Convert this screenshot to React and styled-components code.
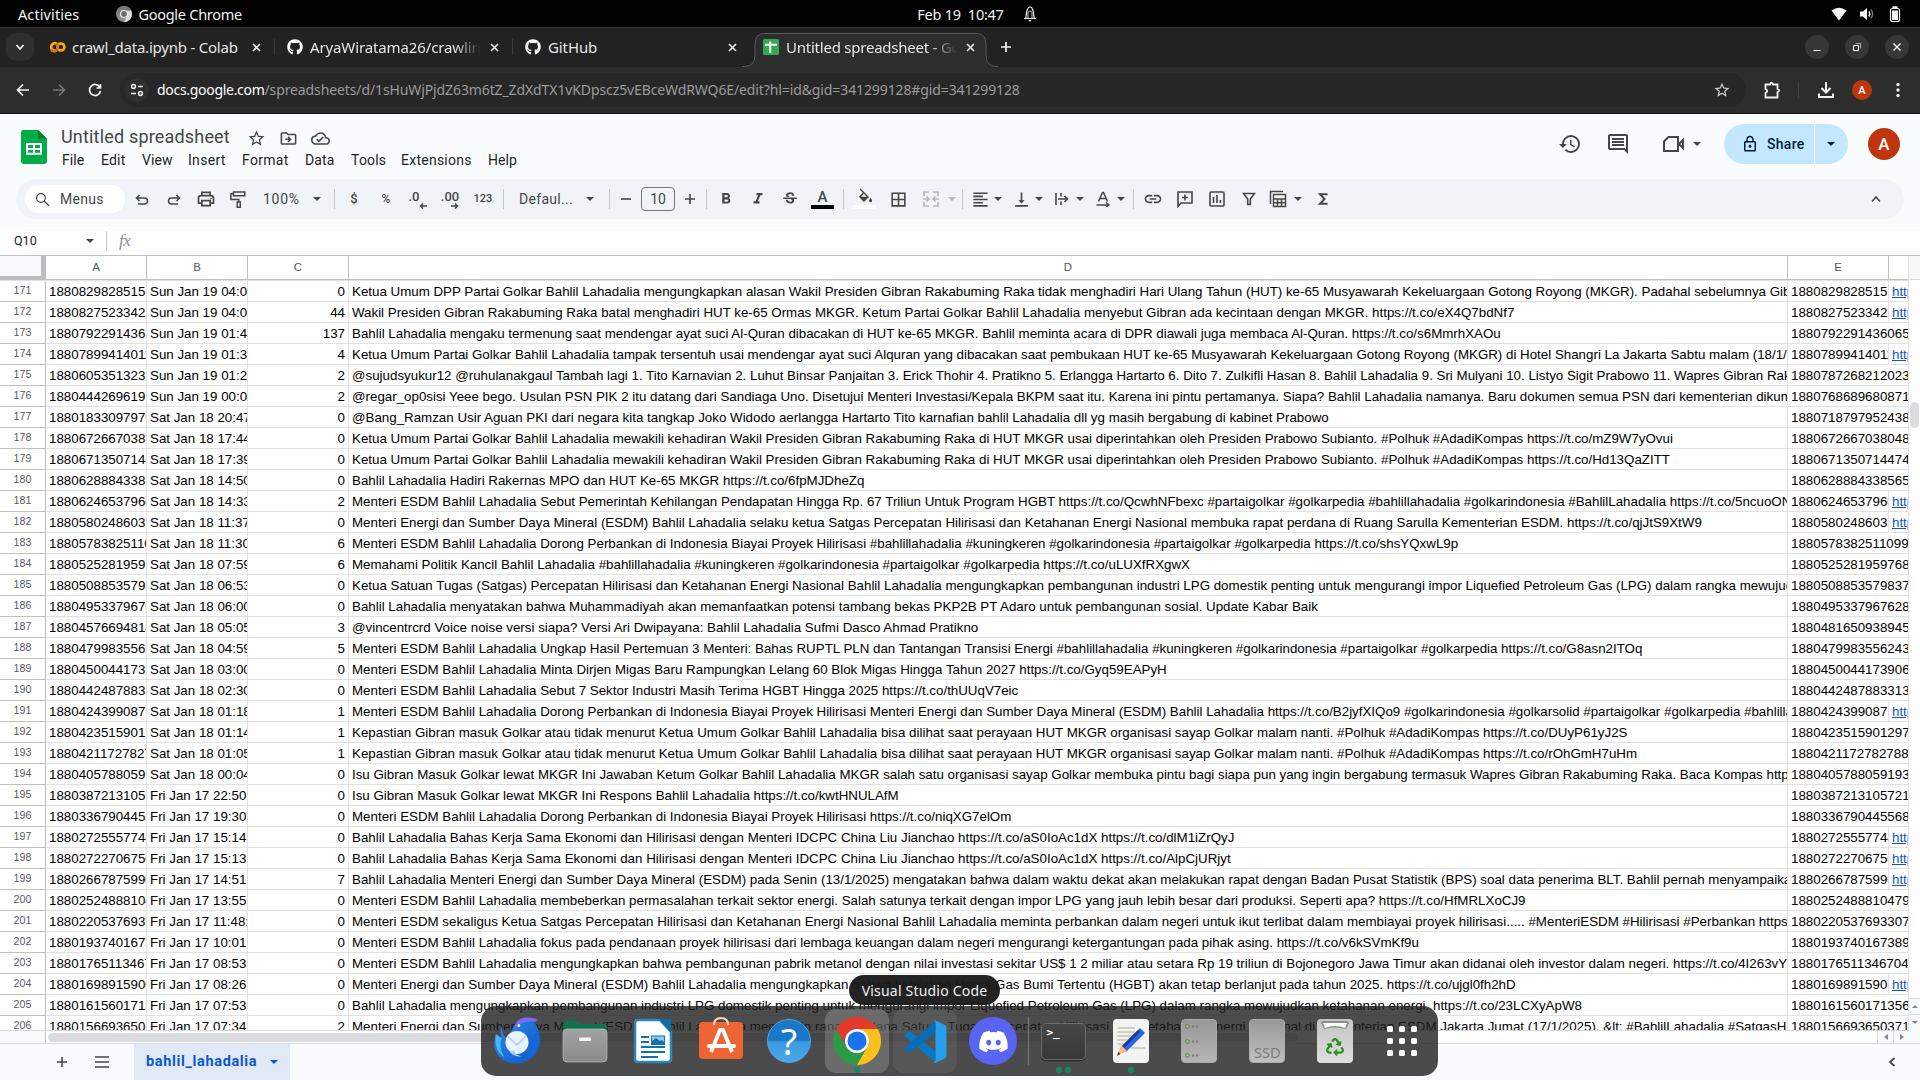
import React from "react";
import styled, { createGlobalStyle, css } from "styled-components";
import {
  MdHistory, MdOutlineComment, MdStarBorder, MdOutlineDriveFileMove, MdOutlineCloudDone,
  MdFormatBold, MdFormatItalic, MdStrikethroughS, MdBorderAll, MdFormatAlignLeft,
  MdVerticalAlignBottom, MdLink, MdOutlineLock,
} from "react-icons/md";
import { FaGithub, FaDiscord, FaRecycle } from "react-icons/fa";

const GlobalStyle = createGlobalStyle`
  * { box-sizing: border-box; }
  html, body { margin: 0; padding: 0; background: #fff; }
  svg { display: block; flex: none; }
`;

const uiFont = `"Noto Sans", "Open Sans", sans-serif`;
const docFont = `Roboto, "Liberation Sans", sans-serif`;
const cellFont = `"Liberation Sans", Arial, sans-serif`;

const Screen = styled.div`
  position: relative;
  width: 1920px;
  height: 1080px;
  overflow: hidden;
  display: flex;
  flex-direction: column;
  background: #fff;
  font-family: ${docFont};
`;

const Label = styled.span`
  white-space: pre;
  letter-spacing: ${(p) => p.$track || 0}px;
`;

/* ---------- desktop top bar ---------- */
const TopBar = styled.header`
  height: 27px;
  flex: none;
  display: grid;
  grid-template-columns: 1fr auto 1fr;
  align-items: center;
  background: #020202;
  color: #f2f2f2;
  font: 400 14.5px/26px ${uiFont};
`;
const TopLeft = styled.div`
  display: flex;
  align-items: center;
  padding-left: 18px;
`;
const ChromeMark = styled.div`
  margin: 0 6px 0 37px;
`;
const Clock = styled.div`
  display: flex;
  align-items: center;
  gap: 18px;
  padding-left: 35px;
`;
const TopRight = styled.div`
  display: flex;
  align-items: center;
  justify-content: flex-end;
  gap: 12px;
  padding-right: 17px;
`;

/* ---------- browser tabs ---------- */
const TabStrip = styled.div`
  height: 40px;
  flex: none;
  display: flex;
  align-items: flex-start;
  background: #222;
  border-top: 1px solid #333;
  color: #e6e6e6;
  font: 400 15px/28px ${uiFont};
`;
const TabSearch = styled.div`
  width: 28px;
  height: 28px;
  margin: 5px 3px 0 6px;
  border-radius: 10px;
  background: #2f2f2f;
  display: flex;
  align-items: center;
  justify-content: center;
`;
const TabItem = styled.div`
  position: relative;
  width: 238px;
  height: 39px;
  padding: 0 11px 1px;
  display: flex;
  align-items: center;
  ${(p) => p.$line && css`
    &::after {
      content: "";
      position: absolute;
      right: 0;
      top: 11px;
      width: 1px;
      height: 16px;
      background: #3a3a3a;
    }
  `}
`;
const ActiveShape = styled.svg`
  position: absolute;
  left: -9px;
  top: 5px;
`;
const TabIcon = styled.div`
  position: relative;
  width: 18px;
  display: flex;
  justify-content: center;
`;
const TabTitle = styled.div`
  position: relative;
  flex: 1;
  margin: 0 5px 0 6px;
  overflow: hidden;
  white-space: nowrap;
  letter-spacing: ${(p) => p.$track || 0}px;
  ${(p) => p.$fade && css`mask-image: linear-gradient(to right, #000 84%, transparent);`}
`;
const TabClose = styled.div`
  position: relative;
  width: 16px;
  display: flex;
  justify-content: center;
`;
const NewTab = styled.div`
  width: 34px;
  height: 28px;
  margin-top: 5px;
  display: flex;
  align-items: center;
  justify-content: center;
`;
const WindowButtons = styled.div`
  margin: 7px 11px 0 auto;
  display: flex;
  gap: 16px;
`;
const WindowButton = styled.div`
  width: 24px;
  height: 24px;
  border-radius: 50%;
  background: #373737;
  display: flex;
  align-items: center;
  justify-content: center;
`;

/* ---------- address bar ---------- */
const AddressRow = styled.div`
  height: 47px;
  flex: none;
  display: flex;
  align-items: center;
  background: #2d2d2d;
  border-bottom: 1px solid #161616;
  padding: 0 0 0 5px;
`;
const NavButton = styled.div`
  width: 36px;
  height: 34px;
  display: flex;
  align-items: center;
  justify-content: center;
`;
const Omnibox = styled.div`
  flex: 1;
  height: 34px;
  margin-left: 7px;
  padding: 0 15px 0 5px;
  border-radius: 17px;
  background: #272727;
  display: flex;
  align-items: center;
  color: #9b9b9b;
  font: 400 14px/34px ${uiFont};
`;
const SiteInfo = styled.div`
  width: 24px;
  height: 24px;
  margin-right: 8px;
  border-radius: 50%;
  background: #2f2f2f;
  display: flex;
  align-items: center;
  justify-content: center;
`;
const Host = styled.span`
  color: #fff;
  white-space: pre;
  letter-spacing: ${(p) => p.$track || 0}px;
`;
const OmniEnd = styled.div`
  margin-left: auto;
`;
const BrowserTools = styled.div`
  display: flex;
  align-items: center;
  flex: none;
  width: 174px;
`;
const BrowserTool = styled.div`
  width: ${(p) => p.$w}px;
  flex: none;
  display: flex;
  justify-content: center;
`;
const Avatar = styled.div`
  width: ${(p) => p.$size}px;
  height: ${(p) => p.$size}px;
  border-radius: 50%;
  background: #bf360c;
  color: #fff;
  font: 500 ${(p) => p.$font}px/${(p) => p.$size + 1}px ${docFont};
  text-align: center;
`;

/* ---------- document header ---------- */
const DocHeader = styled.div`
  height: 113px;
  flex: none;
  background: #f9fbfd;
  display: flex;
  flex-direction: column;
`;
const DocTop = styled.div`
  height: 65px;
  flex: none;
  display: flex;
  padding: 0 20px 0 21px;
`;
const LogoBox = styled.div`
  width: 40px;
  padding-top: 16px;
`;
const TitleBlock = styled.div`
  flex: 1;
`;
const TitleRow = styled.div`
  height: 35px;
  padding-top: 10px;
  display: flex;
  align-items: center;
  color: #444746;
`;
const DocTitle = styled.div`
  width: 186px;
  font-size: 18px;
  line-height: 26px;
  white-space: nowrap;
  letter-spacing: 0.18px;
`;
const TitleIcon = styled.div`
  width: 32px;
  display: flex;
  padding-top: 3px;
`;
const MenuRow = styled.nav`
  display: flex;
  padding: 0 0 0 1px;
  color: #1f1f1f;
  font-size: 14px;
  line-height: 22px;
`;
const MenuItem = styled.div`
  width: ${(p) => p.$w}px;
  white-space: nowrap;
  letter-spacing: ${(p) => p.$track}px;
`;
const DocActions = styled.div`
  display: flex;
  align-items: center;
  height: 60px;
  color: #444746;
`;
const ActionSlot = styled.div`
  width: ${(p) => p.$w}px;
  margin-left: ${(p) => p.$gap || 0}px;
  display: flex;
  justify-content: center;
  align-items: center;
`;
const SharePill = styled.div`
  display: flex;
  width: 124px;
  height: 40px;
  margin: 0 20px 0 23px;
  border-radius: 20px;
  overflow: hidden;
  color: #001d35;
`;
const ShareMain = styled.div`
  width: 91px;
  background: #c2e7ff;
  border-right: 1px solid #fff;
  padding-left: 17px;
  display: flex;
  align-items: center;
  gap: 8px;
  font: 500 14px/40px ${docFont};
  letter-spacing: 0.3px;
`;
const ShareMore = styled.div`
  flex: 1;
  background: #c2e7ff;
  display: flex;
  align-items: center;
  padding-left: 12px;
`;

/* ---------- toolbar ---------- */
const Toolbar = styled.div`
  height: 40px;
  flex: none;
  margin: 0 16px;
  padding: 0 12px 0 9px;
  border-radius: 20px;
  background: #f0f4f9;
  display: flex;
  align-items: center;
  color: #444746;
`;
const MenuSearch = styled.div`
  width: 100px;
  height: 28px;
  border-radius: 14px;
  background: #fff;
  padding-left: 10px;
  display: flex;
  align-items: center;
  gap: 10px;
  font-size: 14px;
  letter-spacing: 0.3px;
  margin-right: 1px;
`;
const Slot = styled.div`
  width: ${(p) => p.$w}px;
  height: 30px;
  margin-left: ${(p) => p.$gap || 0}px;
  flex: none;
  display: flex;
  align-items: center;
  justify-content: center;
  opacity: ${(p) => (p.$dim ? 0.35 : 1)};
  font: 500 ${(p) => p.$font || 12}px/30px ${docFont};
  white-space: nowrap;
  letter-spacing: ${(p) => p.$track || 0}px;
`;
const PickerSlot = styled(Slot)`
  justify-content: space-between;
  padding: 0 ${(p) => p.$end}px 0 ${(p) => p.$start}px;
  font-weight: 400;
`;
const Divider = styled.i`
  width: 1px;
  height: 20px;
  flex: none;
  background: #c7c7c7;
  margin: 0 ${(p) => p.$after}px 0 ${(p) => p.$before}px;
`;
const SizeBox = styled.div`
  width: 34px;
  height: 24px;
  border: 1px solid #747775;
  border-radius: 4px;
  font: 400 14px/22px ${docFont};
  text-align: center;
`;
const ColorSlot = styled(Slot)`
  flex-direction: column;
  justify-content: flex-end;
  padding-bottom: 5px;
`;
const Swatch = styled.i`
  width: 23px;
  height: 4px;
  background: ${(p) => p.$color};
`;
const LetterA = styled.div`
  height: 16px;
  font: 500 15px/16px ${docFont};
`;
const ToolbarEnd = styled.div`
  margin-left: auto;
  width: 32px;
  display: flex;
  justify-content: center;
`;

/* ---------- formula bar ---------- */
const FormulaBar = styled.div`
  height: 28px;
  flex: none;
  display: flex;
  align-items: center;
  padding-left: 14px;
  color: #1f1f1f;
  font: 400 12.5px/28px ${docFont};
`;
const NameBox = styled.div`
  width: 72px;
`;
const Fx = styled.div`
  color: #8d8f91;
  font: italic 400 17px/24px "Liberation Serif", serif;
  letter-spacing: -0.5px;
`;

/* ---------- grid ---------- */
const GridFrame = styled.div`
  height: 788px;
  flex: none;
  display: grid;
  grid-template-columns: 1909px 11px;
  grid-template-rows: 774px 13px;
  border-top: 1px solid #c0c0c0;
`;
const Grid = styled.div`
  overflow: hidden;
  border-right: 1px solid #e1e1e1;
`;
const columns = css`
  display: grid;
  grid-template-columns: 46px 101px 101px 101px 1439px 101px 19px;
`;
const HeaderRow = styled.div`
  ${columns}
  height: 25px;
  border-bottom: 1px solid #e1e1e1;
`;
const Corner = styled.div`
  height: 24px;
  background: #f8f9fa;
  border-right: 5px solid #bdbdbd;
  border-bottom: 4px solid #bdbdbd;
`;
const ColumnHead = styled.div`
  height: 24px;
  border-right: ${(p) => (p.$last ? 0 : 1)}px solid #c0c0c0;
  border-bottom: 1px solid #c0c0c0;
  color: #575b5f;
  font: 400 11.5px/22px ${cellFont};
  text-align: center;
`;
const Row = styled.div`
  ${columns}
  height: 21px;
`;
const RowHead = styled.div`
  border-right: 1px solid #c0c0c0;
  border-bottom: 1px solid #c0c0c0;
  color: #575b5f;
  font: 400 10.67px/18px ${cellFont};
  text-align: center;
`;
const Cell = styled.div`
  grid-column: span ${(p) => p.$span || 1};
  padding: 3px 0 0 3px;
  border-right: ${(p) => (p.$open ? 0 : 1)}px solid #e1e1e1;
  border-bottom: 1px solid #e1e1e1;
  overflow: hidden;
  white-space: nowrap;
  color: #000;
  font: 400 13.333px/15px ${cellFont};
`;
const NumberCell = styled(Cell)`
  padding: 3px 3px 0 0;
  text-align: right;
`;
const LinkCell = styled(Cell)`
  color: #1155cc;
  text-decoration: underline;
`;
const VScroll = styled.div`
  display: flex;
  flex-direction: column;
  align-items: center;
`;
const VTop = styled.div`
  width: 11px;
  height: 24px;
  background: #f8f8f8;
  border-bottom: 1px solid #d9d9d9;
`;
const VThumb = styled.div`
  width: 9px;
  height: 26px;
  margin: 122px 0 auto;
  border-radius: 5px;
  background: #dadce0;
`;
const ScrollArrow = styled.div`
  width: ${(p) => p.$w}px;
  height: ${(p) => p.$h}px;
  background: #f8f9fa;
  border: solid #d9d9d9;
  border-width: ${(p) => (p.$side ? "0 0 0 1px" : "1px 0 0 0")};
  display: flex;
  align-items: center;
  justify-content: center;
`;
const HScroll = styled.div`
  display: flex;
  align-items: center;
  border-top: 1px solid #d9d9d9;
`;
const HStart = styled.div`
  width: 46px;
  height: 12px;
  background: #f8f9fa;
  border-right: 1px solid #c0c0c0;
`;
const HThumb = styled.div`
  width: 1250px;
  height: 9px;
  margin: 0 auto 0 2px;
  border-radius: 5px;
  background: #dadce0;
`;
const ScrollCorner = styled.div`
  background: #f8f9fa;
`;

/* ---------- sheet tabs ---------- */
const SheetBar = styled.footer`
  flex: 1;
  display: flex;
  align-items: center;
  border-top: 1px solid #d9dadd;
  background: #f9fbfd;
  padding-left: 42px;
  color: #444746;
`;
const BarButton = styled.div`
  width: 40px;
  display: flex;
  justify-content: center;
`;
const SheetTab = styled.div`
  width: 156px;
  height: 36px;
  margin-left: 12px;
  padding: 0 12px 0 12px;
  background: #e1e9f7;
  color: #0b57d0;
  display: flex;
  align-items: center;
  justify-content: space-between;
  font: 700 14.5px/36px ${docFont};
  letter-spacing: 0.65px;
`;
const PanelToggle = styled(BarButton)`
  margin-left: auto;
  margin-right: 8px;
`;

/* ---------- dock ---------- */
const DockBar = styled.div`
  position: absolute;
  left: 481px;
  top: 1006px;
  width: 957px;
  height: 70px;
  border-radius: 15px;
  background: rgba(31, 31, 31, 0.8);
  display: flex;
  align-items: center;
  padding-left: 4px;
  gap: 4px;
`;
const DockItem = styled.div`
  position: relative;
  width: 64px;
  height: 64px;
  border-radius: 11px;
  background: ${(p) => (p.$lit ? `rgba(255,255,255,${p.$lit})` : "transparent")};
  display: flex;
  align-items: center;
  justify-content: center;
`;
const RunningDots = styled.div`
  position: absolute;
  left: 0;
  right: 0;
  bottom: 0;
  display: flex;
  justify-content: center;
  gap: 3px;
`;
const Dot = styled.i`
  width: 6px;
  height: 6px;
  border-radius: 50%;
  background: #0f8a5f;
`;
const DockLine = styled.i`
  width: 1px;
  height: 48px;
  margin: 0 -2px 0 -1px;
  background: #7a7a7a;
`;
const Tooltip = styled.div`
  position: absolute;
  left: 849px;
  top: 975px;
  width: 151px;
  height: 30px;
  border-radius: 15px;
  background: rgba(26, 26, 26, 0.96);
  color: #f0f0f0;
  font: 400 14px/31px ${uiFont};
  text-align: center;
`;

/* ---------- icons ---------- */
const Stroke = ({ d, size = 18, w = 2, box = 24, children, ...rest }) => (
  <svg width={size} height={size} viewBox={`0 0 ${box} ${box}`} fill="none" stroke="currentColor" strokeWidth={w} {...rest}>
    {d && <path d={d} />}
    {children}
  </svg>
);
const Caret = ({ color = "currentColor" }) => (
  <svg width="8" height="4" viewBox="0 0 8 4"><path d="M0 0h8L4 4z" fill={color} /></svg>
);
const Close = ({ color = "#f1f1f1" }) => (
  <svg width="9" height="9" viewBox="0 0 9 9"><path d="M1 1l7 7M8 1L1 8" stroke={color} strokeWidth="1.6" /></svg>
);
const GrayChrome = () => (
  <svg width="16" height="16" viewBox="0 0 16 16">
    <circle cx="8" cy="8" r="8" fill="#8b8b8b" />
    <path d="M8 4.5h7.2A8 8 0 0 1 8 16l3.2-6z" fill="#dcdcdc" />
    <path d="M1 4a8 8 0 0 1 14.2.5H8L4.8 9.5z" fill="#777" />
    <circle cx="8" cy="8" r="4" fill="#f0f0f0" />
    <circle cx="8" cy="8" r="2.9" fill="#6e6e6e" />
  </svg>
);
const Bell = () => (
  <Stroke size={16} box={16} w={1.2} stroke="#f0f0f0">
    <path d="M2 12.5h12M3.5 12.5C4.6 10.500 4 7 5 4.500Q6 1 8 1t3 3.500c1 2.500.4 6 1.500 8" />
    <path d="M6 12V7c0-2.500 4-2.500 4 0v5" strokeWidth=".9" />
    <path d="M6.300 14h3.400L8 16z" fill="#f0f0f0" stroke="none" />
  </Stroke>
);
const Wifi = () => (
  <svg width="16" height="16" viewBox="0 0 16 16"><path d="M8 14.500L.5 4.500Q8-1 15.500 4.500z" fill="#f5f5f5" /></svg>
);
const Volume = () => (
  <svg width="16" height="16" viewBox="0 0 16 16">
    <path d="M1 5.500h3L8 2v12l-4-3.500H1z" fill="#f5f5f5" />
    <path d="M9.800 5.500q2 2.500 0 5" stroke="#f5f5f5" strokeWidth="1.300" fill="none" />
    <path d="M12 3.500q3.400 4.500 0 9" stroke="#777" strokeWidth="1.300" fill="none" />
  </svg>
);
const Battery = () => (
  <svg width="16" height="16" viewBox="0 0 16 16">
    <rect x="3.500" y="2.500" width="9" height="13" rx="2" fill="none" stroke="#f5f5f5" strokeWidth="1.200" />
    <rect x="5.500" y=".3" width="5" height="2" fill="#f5f5f5" />
    <rect x="5" y="4.500" width="6" height="9.500" fill="#f5f5f5" />
  </svg>
);
const ColabIcon = () => (
  <svg width="17" height="12" viewBox="0 0 18 12" fill="none" strokeWidth="2.800">
    <path d="M8.200 2.500a4 4 0 1 0 0 7" stroke="#f9ab00" />
    <circle cx="12.600" cy="6" r="3.700" stroke="#f9ab00" />
    <path d="M2.300 8.800a4 4 0 0 0 5.900.7" stroke="#e8710a" />
    <path d="M10 3.300a3.700 3.700 0 0 0 0 5.400" stroke="#e8710a" />
  </svg>
);
const SheetFavicon = () => (
  <svg width="16" height="16" viewBox="0 0 16 16">
    <rect width="16" height="16" rx="1.500" fill="#34a853" />
    <path d="M2 5.800h12M7.200 2.500v11.500" stroke="#fff" strokeWidth="2" />
  </svg>
);
const SheetsLogo = () => (
  <svg width="26" height="34" viewBox="0 0 26 35" preserveAspectRatio="none">
    <path d="M2.500 0H17l9 9v23.500a2.500 2.500 0 0 1-2.500 2.500h-21A2.500 2.500 0 0 1 0 32.500v-30A2.500 2.500 0 0 1 2.500 0z" fill="#00ac47" />
    <path d="M17 0l9 9h-9z" fill="#00832d" />
    <path d="M5 13.500h16v12H5z M7 15.500v3h5v-3z M14 15.500v3h5v-3z M7 20.500v3h5v-3z M14 20.500v3h5v-3z" fill="#fff" fillRule="evenodd" />
  </svg>
);
const PaintRoller = () => (
  <Stroke size={18} w={2}>
    <path d="M6 2.500h15v5H6zM6 5H2.500v7.500H13V16" />
    <path d="M11 16h4v7h-4z" />
  </Stroke>
);
const Print = () => (
  <Stroke size={20} w={2}>
    <path d="M7 8V4h10v4M7 17H3v-6q0-3 3-3h12q3 0 3 3v6h-4" />
    <path d="M7 14h10v6H7z" />
    <circle cx="18" cy="11.500" r="1" fill="currentColor" stroke="none" />
  </Stroke>
);
const FillBucket = () => (
  <svg width="16" height="17" viewBox="0 0 18 18">
    <path d="M4 0l9.500 9.500-5.700 5.700L2 9.400l4.600-4.600L3 1.200z" fill="currentColor" />
    <path d="M7.800 6L4.600 9.200h6.300z" fill="#f0f4f9" />
    <path d="M15.200 10.500q1.800 2.300 1.800 3.200a1.700 1.700 0 0 1-3.400 0q0-.9 1.600-3.200z" fill="currentColor" />
  </svg>
);

const Thunderbird = () => (
  <svg width="48" height="48" viewBox="0 0 50 50">
    <defs>
      <linearGradient id="tb" x1="0" y1="0" x2="1" y2="1">
        <stop offset="0" stopColor="#2a8df2" /><stop offset="1" stopColor="#0f55c4" />
      </linearGradient>
    </defs>
    <path d="M10 8c-2 4-3 8-1 14L3 18C0 28 1 36 7 42c8 8 24 9 33 1 9-7 11-19 7-30-1-4-3-6-5-7l5-2C40 0 30-1 25 5q-4 5-6 10l-6 6Q8 16 10 8z" fill="url(#tb)" />
    <path d="M25 5C30-1 40 0 47 3l-5 2c-8-2-15 3-19 8 0-3 0-5 2-8z" fill="#7c6cf0" />
    <path d="M46 13c3 11 1 22-7 29-5 4-10 4-10 4 8-5 12-11 11-19z" fill="#1667d8" />
    <path d="M3 18c-2 13 3 21 9 24C7 34 7 28 9 22z" fill="#48b5f8" />
    <circle cx="25" cy="26.500" r="12" fill="#eaf2fd" />
    <path d="M15 20l10 9 9-9" fill="none" stroke="#b4cdf0" strokeWidth="1.600" />
    <path d="M17 36q5 6 13 5-7-1-8-6z" fill="#9fd2fb" />
    <circle cx="27" cy="9" r="1.500" fill="#dff" />
  </svg>
);
const FilesIcon = () => (
  <svg width="48" height="48" viewBox="0 0 48 48">
    <defs><linearGradient id="fi" x1="0" y1="0" x2="0" y2="1"><stop offset="0" stopColor="#a2a2a2" /><stop offset="1" stopColor="#8b8b8b" /></linearGradient></defs>
    <path d="M2 8q0-4 3-4h10q2 0 4 3h23q4 0 4 4v8H2z" fill="#10734f" />
    <rect x="2" y="12" width="44" height="33" rx="4" fill="url(#fi)" stroke="#bdbdbd" strokeWidth=".7" />
    <rect x="18" y="20.500" width="12" height="3.500" rx="1" fill="#f5f5f5" />
  </svg>
);
const WriterIcon = () => (
  <svg width="48" height="48" viewBox="0 0 48 48">
    <path d="M9 3h22l11 12v27q0 3-3 3H9q-3 0-3-3V6q0-3 3-3z" fill="#fff" stroke="#2a87bd" strokeWidth="2.500" />
    <path d="M30 2h12v14z" fill="#0f6ba5" />
    <path d="M12 20h8M12 25h8M12 30h24M12 35h24M12 40h17" stroke="#1171ad" strokeWidth="1.900" />
    <rect x="22.500" y="19" width="13" height="8.500" fill="#90ccea" stroke="#1171ad" />
    <path d="M23 27v-3l4-3 4 3 2-1 2 2v2z" fill="#1171ad" />
  </svg>
);
const SoftwareIcon = () => (
  <svg width="48" height="48" viewBox="0 0 48 48">
    <path d="M17 8q0-7 7-7t7 7" stroke="#f2d4bd" strokeWidth="2" fill="none" />
    <rect x="2" y="5" width="44" height="37" rx="4" fill="#ed6534" />
    <path d="M17 8q0-3 1-4M31 8q0-3-1-4" stroke="#f2d4bd" strokeWidth="2" />
    <path d="M14 35l9-22h3l9 22" stroke="#fff" strokeWidth="3.800" fill="none" strokeLinejoin="round" />
    <path d="M12 29h25" stroke="#fff" strokeWidth="4" strokeLinecap="round" />
  </svg>
);
const HelpCircle = styled.div`
  width: 44px;
  height: 44px;
  border-radius: 50%;
  background: linear-gradient(#1978c8 0 48%, #3b9be0 52%, #4aa8e8);
  border: 1px solid #4ba6e5;
  color: #fff;
  font: 400 37px/41px ${uiFont};
  text-align: center;
`;
const ChromeIcon = () => (
  <svg width="48" height="48" viewBox="0 0 48 48">
    <path d="M24 12H44.780A24 24 0 0 0 3.220 12L13.600 30A12 12 0 0 1 24 12z" fill="#e33b2e" />
    <path d="M13.600 30L3.220 12A24 24 0 0 0 24 48L34.400 30A12 12 0 0 1 13.600 30z" fill="#2d9a47" />
    <path d="M34.400 30L24 48A24 24 0 0 0 44.780 12H24A12 12 0 0 1 34.400 30z" fill="#fcc21b" />
    <circle cx="24" cy="24" r="12" fill="#fff" />
    <circle cx="24" cy="24" r="9.600" fill="#1a73e8" />
  </svg>
);
const CodeIcon = () => (
  <svg width="43" height="43" viewBox="0 0 43 43">
    <path d="M31 42L1.200 16.500q-1-1 0-2l3-2.800q1-.8 2 0L31 31z" fill="#0879c5" />
    <path d="M31 1L1.200 27.500q-1 1 0 2l3 2.800q1 .8 2 0L31 13z" fill="#0a6cb5" />
    <path d="M31.500.5L41 5q1.500.8 1.500 2.500v28.500q0 1.500-1.500 2.200L31.500 43q-1.500 0-2-1 2 .5 2-2V3q0-2.500-2-2z" fill="#25a0ee" />
  </svg>
);
const DiscordDisc = styled.div`
  width: 48px;
  height: 48px;
  border-radius: 50%;
  background: #5865f2;
  color: #fff;
  display: flex;
  align-items: center;
  justify-content: center;
`;
const TerminalTile = styled.div`
  width: 45px;
  height: 37px;
  border-radius: 5px;
  border: 1px solid #6e6e6e;
  background: linear-gradient(#474747, #383838);
  box-shadow: 0 1px 1px #222;
  color: #fff;
  font: 700 11px/15px "DejaVu Sans Mono", monospace;
  padding: 1px 0 0 5px;
`;
const EditorIcon = () => (
  <svg width="48" height="48" viewBox="0 0 48 48">
    <rect x="6" y="2" width="36" height="44" rx="4" fill="#f3f3f2" />
    <path d="M10 11h18M10 15h18M10 19h18M10 23h14M10 27h10M24 31h14" stroke="#c9c5b5" strokeWidth="1.700" />
    <path d="M33 11l5 5-19 19-5-5z" fill="#2c66dd" />
    <path d="M31 13l-17 17 2 2 17-17z" fill="#173a9c" />
    <path d="M14 28l6 6-10 4.500z" fill="#fcbd7c" />
    <path d="M11.500 35l2 2-3.500 1.800z" fill="#333" />
  </svg>
);
const DiskTile = styled.div`
  width: 36px;
  height: 44px;
  border-radius: 4px;
  background: linear-gradient(#989898, ${(p) => p.$end || "#b5b5b5"});
  border: 1px solid #aaa;
  overflow: hidden;
  display: flex;
  flex-direction: column;
  justify-content: ${(p) => (p.$slots ? "space-between" : "flex-end")};
  padding: ${(p) => (p.$slots ? "4px 3px" : "0 0 0 4px")};
  color: #7c7c7c;
  font: 400 14.500px/20px ${uiFont};
`;
const Led = () => (
  <svg width="14" height="5" viewBox="0 0 14 5">
    <circle cx="2.500" cy="2.500" r="1.800" fill="#9ed24a" stroke="#727272" />
    <circle cx="8" cy="2.500" r="1.200" fill="#7b7b7b" /><circle cx="12" cy="2.500" r="1.200" fill="#7b7b7b" />
  </svg>
);
const TrashTile = styled.div`
  width: 36px;
  height: 44px;
  border-radius: 4px;
  background: linear-gradient(#c5c5c5, #dedede);
  color: #289120;
  display: flex;
  flex-direction: column;
  align-items: center;
  justify-content: space-between;
  padding: 2px 0 7px;
`;
const AppGrid = styled.div`
  width: 30px;
  height: 30px;
  margin-right: 2px;
  display: grid;
  grid-template-columns: repeat(3, 6px);
  grid-auto-rows: 6px;
  gap: 6px;
`;
const AppDot = styled.i`
  background: #fafafa;
  border-radius: 1.500px;
`;

/* ---------- data ---------- */
const tabs = [
  { title: "crawl_data.ipynb - Colab", icon: <ColabIcon />, line: true, track: -0.22 },
  { title: "AryaWiratama26/crawling", icon: <FaGithub size={16} color="#fff" />, line: true, fade: true, track: -0.12 },
  { title: "GitHub", icon: <FaGithub size={16} color="#fff" />, track: -0.1 },
  { title: "Untitled spreadsheet - Go", icon: <SheetFavicon />, active: true, fade: true, track: -0.23 },
];
const menus = [
  ["File", 39, 0.1], ["Edit", 41, 0.2], ["View", 46, 0.1], ["Insert", 54, 0.3], ["Format", 63, 0.3],
  ["Data", 46, 0.1], ["Tools", 50, 0.2], ["Extensions", 87, 0.25], ["Help", 40, 0.1],
];
const rows = [
  [171, "1880829828515", "Sun Jan 19 04:0", 0, "Ketua Umum DPP Partai Golkar Bahlil Lahadalia mengungkapkan alasan Wakil Presiden Gibran Rakabuming Raka tidak menghadiri Hari Ulang Tahun (HUT) ke-65 Musyawarah Kekeluargaan Gotong Royong (MKGR). Padahal sebelumnya Gibran", "1880829828515", 1],
  [172, "18808275233422", "Sun Jan 19 04:0", 44, "Wakil Presiden Gibran Rakabuming Raka batal menghadiri HUT ke-65 Ormas MKGR. Ketum Partai Golkar Bahlil Lahadalia menyebut Gibran ada kecintaan dengan MKGR. https://t.co/eX4Q7bdNf7", "18808275233422", 1],
  [173, "1880792291436", "Sun Jan 19 01:4", 137, "Bahlil Lahadalia mengaku termenung saat mendengar ayat suci Al-Quran dibacakan di HUT ke-65 MKGR. Bahlil meminta acara di DPR diawali juga membaca Al-Quran. https://t.co/s6MmrhXAOu", "1880792291436065"],
  [174, "18807899414011", "Sun Jan 19 01:3", 4, "Ketua Umum Partai Golkar Bahlil Lahadalia tampak tersentuh usai mendengar ayat suci Alquran yang dibacakan saat pembukaan HUT ke-65 Musyawarah Kekeluargaan Gotong Royong (MKGR) di Hotel Shangri La Jakarta Sabtu malam (18/1/2025)", "18807899414011", 1],
  [175, "1880605351323", "Sun Jan 19 01:2", 2, "@sujudsyukur12 @ruhulanakgaul Tambah lagi 1. Tito Karnavian 2. Luhut Binsar Panjaitan 3. Erick Thohir 4. Pratikno 5. Erlangga Hartarto 6. Dito 7. Zulkifli Hasan 8. Bahlil Lahadalia 9. Sri Mulyani 10. Listyo Sigit Prabowo 11. Wapres Gibran Rakabuming", "1880787268212023"],
  [176, "18804442696197", "Sun Jan 19 00:0", 2, "@regar_op0sisi Yeee bego. Usulan PSN PIK 2 itu datang dari Sandiaga Uno. Disetujui Menteri Investasi/Kepala BKPM saat itu. Karena ini pintu pertamanya. Siapa? Bahlil Lahadalia namanya. Baru dokumen semua PSN dari kementerian dikumpulkan", "1880768689680871"],
  [177, "18801833097976", "Sat Jan 18 20:47", 0, "@Bang_Ramzan Usir Aguan PKI dari negara kita tangkap Joko Widodo aerlangga Hartarto Tito karnafian bahlil Lahadalia dll yg masih bergabung di kabinet Prabowo", "1880718797952438"],
  [178, "1880672667038", "Sat Jan 18 17:44", 0, "Ketua Umum Partai Golkar Bahlil Lahadalia mewakili kehadiran Wakil Presiden Gibran Rakabuming Raka di HUT MKGR usai diperintahkan oleh Presiden Prabowo Subianto. #Polhuk #AdadiKompas https://t.co/mZ9W7yOvui", "1880672667038048"],
  [179, "18806713507144", "Sat Jan 18 17:39", 0, "Ketua Umum Partai Golkar Bahlil Lahadalia mewakili kehadiran Wakil Presiden Gibran Rakabuming Raka di HUT MKGR usai diperintahkan oleh Presiden Prabowo Subianto. #Polhuk #AdadiKompas https://t.co/Hd13QaZITT", "1880671350714474"],
  [180, "1880628884338", "Sat Jan 18 14:50", 0, "Bahlil Lahadalia Hadiri Rakernas MPO dan HUT Ke-65 MKGR https://t.co/6fpMJDheZq", "1880628884338565"],
  [181, "18806246537960", "Sat Jan 18 14:33", 2, "Menteri ESDM Bahlil Lahadalia Sebut Pemerintah Kehilangan Pendapatan Hingga Rp. 67 Triliun Untuk Program HGBT https://t.co/QcwhNFbexc #partaigolkar #golkarpedia #bahlillahadalia #golkarindonesia #BahlilLahadalia https://t.co/5ncuoON", "18806246537960", 1],
  [182, "1880580248603", "Sat Jan 18 11:37", 0, "Menteri Energi dan Sumber Daya Mineral (ESDM) Bahlil Lahadalia selaku ketua Satgas Percepatan Hilirisasi dan Ketahanan Energi Nasional membuka rapat perdana di Ruang Sarulla Kementerian ESDM. https://t.co/qjJtS9XtW9", "1880580248603", 1],
  [183, "18805783825110", "Sat Jan 18 11:30", 6, "Menteri ESDM Bahlil Lahadalia Dorong Perbankan di Indonesia Biayai Proyek Hilirisasi #bahlillahadalia #kuningkeren #golkarindonesia #partaigolkar #golkarpedia https://t.co/shsYQxwL9p", "1880578382511099"],
  [184, "18805252819597", "Sat Jan 18 07:59", 6, "Memahami Politik Kancil Bahlil Lahadalia #bahlillahadalia #kuningkeren #golkarindonesia #partaigolkar #golkarpedia https://t.co/uLUXfRXgwX", "1880525281959768"],
  [185, "18805088535798", "Sat Jan 18 06:53", 0, "Ketua Satuan Tugas (Satgas) Percepatan Hilirisasi dan Ketahanan Energi Nasional Bahlil Lahadalia mengungkapkan pembangunan industri LPG domestik penting untuk mengurangi impor Liquefied Petroleum Gas (LPG) dalam rangka mewujudkan", "1880508853579837"],
  [186, "18804953379676", "Sat Jan 18 06:00", 0, "Bahlil Lahadalia menyatakan bahwa Muhammadiyah akan memanfaatkan potensi tambang bekas PKP2B PT Adaro untuk pembangunan sosial. Update Kabar Baik", "1880495337967628"],
  [187, "18804576694814", "Sat Jan 18 05:05", 3, "@vincentrcrd Voice noise versi siapa? Versi Ari Dwipayana: Bahlil Lahadalia Sufmi Dasco Ahmad Pratikno", "1880481650938945"],
  [188, "18804799835562", "Sat Jan 18 04:59", 5, "Menteri ESDM Bahlil Lahadalia Ungkap Hasil Pertemuan 3 Menteri: Bahas RUPTL PLN dan Tantangan Transisi Energi #bahlillahadalia #kuningkeren #golkarindonesia #partaigolkar #golkarpedia https://t.co/G8asn2ITOq", "1880479983556243"],
  [189, "1880450044173", "Sat Jan 18 03:00", 0, "Menteri ESDM Bahlil Lahadalia Minta Dirjen Migas Baru Rampungkan Lelang 60 Blok Migas Hingga Tahun 2027 https://t.co/Gyq59EAPyH", "1880450044173906"],
  [190, "18804424878833", "Sat Jan 18 02:30", 0, "Menteri ESDM Bahlil Lahadalia Sebut 7 Sektor Industri Masih Terima HGBT Hingga 2025 https://t.co/thUUqV7eic", "1880442487883313"],
  [191, "1880424399087", "Sat Jan 18 01:18", 1, "Menteri ESDM Bahlil Lahadalia Dorong Perbankan di Indonesia Biayai Proyek Hilirisasi Menteri Energi dan Sumber Daya Mineral (ESDM) Bahlil Lahadalia https://t.co/B2jyfXIQo9 #golkarindonesia #golkarsolid #partaigolkar #golkarpedia #bahlillahadalia", "1880424399087", 1],
  [192, "18804235159012", "Sat Jan 18 01:14", 1, "Kepastian Gibran masuk Golkar atau tidak menurut Ketua Umum Golkar Bahlil Lahadalia bisa dilihat saat perayaan HUT MKGR organisasi sayap Golkar malam nanti. #Polhuk #AdadiKompas https://t.co/DUyP61yJ2S", "1880423515901297"],
  [193, "18804211727827", "Sat Jan 18 01:05", 1, "Kepastian Gibran masuk Golkar atau tidak menurut Ketua Umum Golkar Bahlil Lahadalia bisa dilihat saat perayaan HUT MKGR organisasi sayap Golkar malam nanti. #Polhuk #AdadiKompas https://t.co/rOhGmH7uHm", "1880421172782788"],
  [194, "18804057880591", "Sat Jan 18 00:04", 0, "Isu Gibran Masuk Golkar lewat MKGR Ini Jawaban Ketum Golkar Bahlil Lahadalia MKGR salah satu organisasi sayap Golkar membuka pintu bagi siapa pun yang ingin bergabung termasuk Wapres Gibran Rakabuming Raka. Baca Kompas https", "1880405788059193"],
  [195, "18803872131057", "Fri Jan 17 22:50", 0, "Isu Gibran Masuk Golkar lewat MKGR Ini Respons Bahlil Lahadalia https://t.co/kwtHNULAfM", "1880387213105721"],
  [196, "18803367904455", "Fri Jan 17 19:30", 0, "Menteri ESDM Bahlil Lahadalia Dorong Perbankan di Indonesia Biayai Proyek Hilirisasi https://t.co/niqXG7elOm", "1880336790445568"],
  [197, "18802725557744", "Fri Jan 17 15:14", 0, "Bahlil Lahadalia Bahas Kerja Sama Ekonomi dan Hilirisasi dengan Menteri IDCPC China Liu Jianchao https://t.co/aS0IoAc1dX https://t.co/dlM1iZrQyJ", "18802725557744", 1],
  [198, "18802722706750", "Fri Jan 17 15:13", 0, "Bahlil Lahadalia Bahas Kerja Sama Ekonomi dan Hilirisasi dengan Menteri IDCPC China Liu Jianchao https://t.co/aS0IoAc1dX https://t.co/AlpCjURjyt", "18802722706750", 1],
  [199, "18802667875990", "Fri Jan 17 14:51", 7, "Bahlil Lahadalia Menteri Energi dan Sumber Daya Mineral (ESDM) pada Senin (13/1/2025) mengatakan bahwa dalam waktu dekat akan melakukan rapat dengan Badan Pusat Statistik (BPS) soal data penerima BLT. Bahlil pernah menyampaikan", "18802667875990", 1],
  [200, "18802524888104", "Fri Jan 17 13:55", 0, "Menteri ESDM Bahlil Lahadalia membeberkan permasalahan terkait sektor energi. Salah satunya terkait dengan impor LPG yang jauh lebih besar dari produksi. Seperti apa? https://t.co/HfMRLXoCJ9", "1880252488810479"],
  [201, "1880220537693", "Fri Jan 17 11:48:", 0, "Menteri ESDM sekaligus Ketua Satgas Percepatan Hilirisasi dan Ketahanan Energi Nasional Bahlil Lahadalia meminta perbankan dalam negeri untuk ikut terlibat dalam membiayai proyek hilirisasi..... #MenteriESDM #Hilirisasi #Perbankan https", "1880220537693307"],
  [202, "18801937401673", "Fri Jan 17 10:01", 0, "Menteri ESDM Bahlil Lahadalia fokus pada pendanaan proyek hilirisasi dari lembaga keuangan dalam negeri mengurangi ketergantungan pada pihak asing. https://t.co/v6kSVmKf9u", "1880193740167389"],
  [203, "18801765113467", "Fri Jan 17 08:53", 0, "Menteri ESDM Bahlil Lahadalia mengungkapkan bahwa pembangunan pabrik metanol dengan nilai investasi sekitar US$ 1 2 miliar atau setara Rp 19 triliun di Bojonegoro Jawa Timur akan didanai oleh investor dalam negeri. https://t.co/4I263vY", "1880176511346704"],
  [204, "18801698915900", "Fri Jan 17 08:26", 0, "Menteri Energi dan Sumber Daya Mineral (ESDM) Bahlil Lahadalia mengungkapkan bahwa kebijakan Harga Gas Bumi Tertentu (HGBT) akan tetap berlanjut pada tahun 2025. https://t.co/ujgl0fh2hD", "1880169891590", 1],
  [205, "18801615601713", "Fri Jan 17 07:53", 0, "Bahlil Lahadalia mengungkapkan pembangunan industri LPG domestik penting untuk mengurangi impor Liquefied Petroleum Gas (LPG) dalam rangka mewujudkan ketahanan energi. https://t.co/23LCXyApW8", "1880161560171356"],
  [206, "1880156693650", "Fri Jan 17 07:34", 2, "Menteri Energi dan Sumber Daya Mineral (ESDM) Bahlil Lahadalia memimpin rapat perdana Satuan Tugas Percepatan Hilirisasi dan Ketahanan Energi Nasional di Kementerian ESDM Jakarta Jumat (17/1/2025). &lt; #BahlilLahadalia #SatgasHilirisasi", "1880156693650371"],
];

function BrowserTab({ tab }) {
  return (
    <TabItem $line={tab.line}>
      {tab.active && (
        <ActiveShape width="256" height="34" viewBox="0 0 256 34">
          <path d="M0 34v-.5h2q11 0 11-11V11q0-10 10-10h211q10 0 10 10v11.500q0 11 11 11h1v.5z" fill="#2d2d2d" />
          <path d="M0 33.500h2q11 0 11-11V11Q13 .500 23 .500h211q10 0 10 10.500v11.500q0 11 11 11h1" fill="none" stroke="#5a5a5a" />
        </ActiveShape>
      )}
      <TabIcon>{tab.icon}</TabIcon>
      <TabTitle $fade={tab.fade} $track={tab.track}>{tab.title}</TabTitle>
      <TabClose><Close /></TabClose>
    </TabItem>
  );
}

const DecimalWrap = styled.div`
  display: flex;
  flex-direction: column;
  align-items: ${(p) => (p.$left ? "flex-start" : "center")};
  width: 18px;
  font: 500 13px/13px ${docFont};
`;
const DecimalArrow = styled.div`
  align-self: flex-end;
`;
function DecimalIcon({ digits, left }) {
  return (
    <DecimalWrap $left={left}>
      {digits}
      <DecimalArrow>
        <Stroke width="8" height="6" viewBox="0 0 8 6" w={1.500} d={left ? "M8 3H1.500M4 .500L1.500 3 4 5.500" : "M0 3h6.500M4 .500L6.500 3 4 5.500"} />
      </DecimalArrow>
    </DecimalWrap>
  );
}

function ToolbarContent() {
  return (
    <Toolbar>
      <MenuSearch>
        <Stroke size={15} w={2}><circle cx="9.500" cy="9.500" r="7" /><path d="M14.500 14.500l8 8" /></Stroke>
        Menus
      </MenuSearch>
      <Slot $w={32}><Stroke size={16} box={16} w={1.500} d="M5.500 4L2.500 7l3 3M2.500 7h8q3 0 3 3t-3 3H4" /></Slot>
      <Slot $w={32}><Stroke size={16} box={16} w={1.500} d="M10.500 4l3 3-3 3M13.500 7h-8q-3 0-3 3t3 3H12" /></Slot>
      <Slot $w={32}><Print /></Slot>
      <Slot $w={31}><PaintRoller /></Slot>
      <PickerSlot $w={77} $font={14} $start={10} $end={9} $track={0.7}>100%<Caret /></PickerSlot>
      <Divider $before={4} $after={3} />
      <Slot $w={32} $font={13}>$</Slot>
      <Slot $w={32} $font={12}>%</Slot>
      <Slot $w={31}>
        <DecimalIcon digits=".0" left />
      </Slot>
      <Slot $w={34}>
        <DecimalIcon digits=".00" />
      </Slot>
      <Slot $w={32} $font={11}>123</Slot>
      <Divider $before={4} $after={3} />
      <PickerSlot $w={98} $font={14} $start={12} $end={11} $track={0.3}>Defaul...<Caret /></PickerSlot>
      <Divider $before={4} $after={3} />
      <Slot $w={26}><Stroke size={12} box={12} w={1.600} d="M1 6h10" /></Slot>
      <Slot $w={38}><SizeBox>10</SizeBox></Slot>
      <Slot $w={26}><Stroke size={12} box={12} w={1.600} d="M1 6h10M6 1v10" /></Slot>
      <Divider $before={3} $after={3} />
      <Slot $w={32}><MdFormatBold size={18} /></Slot>
      <Slot $w={32}><MdFormatItalic size={18} /></Slot>
      <Slot $w={32}><MdStrikethroughS size={18} /></Slot>
      <ColorSlot $w={33}><LetterA>A</LetterA><Swatch $color="#000" /></ColorSlot>
      <Divider $before={4} $after={3} />
      <ColorSlot $w={35}><FillBucket /><Swatch $color="#fff" /></ColorSlot>
      <Slot $w={32}><MdBorderAll size={19} /></Slot>
      <Slot $w={34} $dim>
        <Stroke size={16} box={16} w={1.700} d="M6 1H1v4M10 1h5v4M6 15H1v-4M10 15h5v-4M0 8h5M3.500 5.500L6 8l-2.500 2.500M16 8h-5M12.500 5.500L10 8l2.500 2.500" />
      </Slot>
      <Slot $w={8} $dim><Caret /></Slot>
      <Divider $before={6} $after={6} />
      <Slot $w={22}><MdFormatAlignLeft size={19} /></Slot><Slot $w={14}><Caret /></Slot>
      <Slot $w={22} $gap={5}><MdVerticalAlignBottom size={19} /></Slot><Slot $w={14}><Caret /></Slot>
      <Slot $w={22} $gap={5}><Stroke size={14} box={14} w={1.600} d="M1 1v12M6 1v3.500M6 9.500V13M3 7h9M9.500 4L12.500 7l-3 3" /></Slot><Slot $w={14}><Caret /></Slot>
      <Slot $w={22} $gap={5}><Stroke size={16} box={16} w={1.500} d="M3.500 10.500L7.500 1.500h1l4 9M5 7.500h6M1.500 14h11M11 11.500l3 2.500-3 2" /></Slot><Slot $w={14}><Caret /></Slot>
      <Divider $before={5} $after={5} />
      <Slot $w={28}><MdLink size={20} /></Slot>
      <Slot $w={32} $gap={2}><Stroke size={18} box={18} w={1.600} d="M2 16.500V2h14v11H5zM9 4.500v6M6 7.500h6" /></Slot>
      <Slot $w={32}><Stroke size={16} box={16} w={1.600} d="M1 2q0-1 1-1h12q1 0 1 1v12q0 1-1 1H2q-1 0-1-1zM4.500 6v6M8 4v8M11.500 9v3" /></Slot>
      <Slot $w={32}><Stroke size={14} box={14} w={1.600} d="M1.500 1.500h11L8.300 7v5.500H5.700V7z" /></Slot>
      <Slot $w={26}><Stroke size={18} box={18} w={1.500} d="M1.500 14V1.500H14M4.500 4.500h12v12h-12zM4.500 9h12M8.500 9v7.500M12.500 9v7.500M4.500 12.800h12" /></Slot>
      <Slot $w={14}><Caret /></Slot>
      <Slot $w={32} $gap={2}><Stroke size={14} box={14} w={2} d="M11.500 2.200H4L8.500 7 4 11.800h7.500" /></Slot>
      <ToolbarEnd><Stroke size={10} box={10} w={1.600} d="M1 7.500l4-4.500 4 4.500" /></ToolbarEnd>
    </Toolbar>
  );
}

const dockApps = [
  { node: <Thunderbird /> },
  { node: <FilesIcon /> },
  { node: <WriterIcon /> },
  { node: <SoftwareIcon /> },
  { node: <HelpCircle>?</HelpCircle> },
  { node: <ChromeIcon />, lit: 0.18, dots: 1 },
  { node: <CodeIcon />, lit: 0.07 },
  { node: <DiscordDisc><FaDiscord size={31} /></DiscordDisc> },
  { line: true },
  { node: <TerminalTile>&gt;_</TerminalTile>, dots: 2 },
  { node: <EditorIcon />, dots: 1 },
  { node: <DiskTile $slots><Led /><Led /><Led /></DiskTile> },
  { node: <DiskTile $end="#c0c0c0">SSD</DiskTile> },
  {
    node: (
      <TrashTile>
        <svg width="30" height="9" viewBox="0 0 30 9">
          <path d="M1 2q0-2 3-2h22q3 0 3 2l-3 6q-11-3-22 0z" fill="#8d8d8d" />
          <path d="M3 2h24l-2 5q-10-4-20 0z" fill="#fff" />
        </svg>
        <FaRecycle size={18} />
      </TrashTile>
    ),
  },
  { node: <AppGrid>{Array.from({ length: 9 }, (_, i) => <AppDot key={i} />)}</AppGrid> },
];

export default function App() {
  return (
    <Screen>
      <GlobalStyle />
      <TopBar>
        <TopLeft>
          <Label $track={0.1}>Activities</Label>
          <ChromeMark><GrayChrome /></ChromeMark>
          <Label $track={-0.27}>Google Chrome</Label>
        </TopLeft>
        <Clock><Label $track={-0.25}>Feb 19  10:47</Label><Bell /></Clock>
        <TopRight><Wifi /><Volume /><Battery /></TopRight>
      </TopBar>

      <TabStrip>
        <TabSearch><Stroke size={10} box={10} w={1.800} d="M1.500 3l3.500 4 3.500-4" stroke="#f1f1f1" /></TabSearch>
        {tabs.map((t) => <BrowserTab key={t.title} tab={t} />)}
        <NewTab><Stroke size={12} box={12} w={1.700} d="M1 6h10M6 1v10" stroke="#f1f1f1" /></NewTab>
        <WindowButtons>
          <WindowButton><Stroke size={10} box={10} w={1} d="M1.500 8.500h7" stroke="#fff" /></WindowButton>
          <WindowButton><Stroke size={10} box={10} w={1} stroke="#fff"><path d="M1.500 3.500h5v5h-5z" /><path d="M3.500 1.500h5v5" stroke="#aaa" /></Stroke></WindowButton>
          <WindowButton><Stroke size={10} box={10} w={1.400} d="M1.500 1.500l7 7M8.500 1.500l-7 7" stroke="#fff" /></WindowButton>
        </WindowButtons>
      </TabStrip>

      <AddressRow>
        <NavButton><Stroke size={14} box={14} w={1.700} d="M13 7H2M7 1.500L1.500 7 7 12.500" stroke="#f1f1f1" /></NavButton>
        <NavButton><Stroke size={14} box={14} w={1.700} d="M1 7h11M7 1.500L12.500 7 7 12.500" stroke="#757575" /></NavButton>
        <NavButton><Stroke size={14} box={14} w={1.700} d="M12 4.500A5.500 5.500 0 1 0 12.500 8M12.500 1v4h-4" stroke="#f1f1f1" /></NavButton>
        <Omnibox>
          <SiteInfo><Stroke size={14} box={14} w={1.500} stroke="#f1f1f1"><circle cx="3.500" cy="3.500" r="1.900" /><circle cx="10.500" cy="10.500" r="1.900" /><path d="M8 3.500h5M1 10.500h5" /></Stroke></SiteInfo>
          <Host $track={-0.3}>docs.google.com</Host>
          <Label $track={-0.11}>/spreadsheets/d/1sHuWjPjdZ63m6tZ_ZdXdTX1vKDpscz5vEBceWdRWQ6E/edit?hl=id&amp;gid=341299128#gid=341299128</Label>
          <OmniEnd><MdStarBorder size={18} color="#d0d0d0" /></OmniEnd>
        </Omnibox>
        <BrowserTools>
          <BrowserTool $w={52}><Stroke size={18} box={18} w={1.800} d="M2.500 3.500H7Q8.500 0 10 3.500h4.500V8Q18 9.500 14.500 11v5.500h-12V12Q6 10 2.500 8z" stroke="#f1f1f1" /></BrowserTool>
          <BrowserTool $w={1}><svg width="1" height="16"><rect width="1" height="16" fill="#444" /></svg></BrowserTool>
          <BrowserTool $w={53}><Stroke size={18} box={18} w={2} d="M9 1v10M4.500 7L9 11.500 13.500 7M2 12.500V16h14v-3.500" stroke="#f1f1f1" /></BrowserTool>
          <BrowserTool $w={20}><Avatar $size={20} $font={11}>A</Avatar></BrowserTool>
          <BrowserTool $w={52}><svg width="4" height="16" viewBox="0 0 4 16" fill="#f1f1f1"><circle cx="2" cy="2.500" r="1.700" /><circle cx="2" cy="8" r="1.700" /><circle cx="2" cy="13.500" r="1.700" /></svg></BrowserTool>
        </BrowserTools>
      </AddressRow>

      <DocHeader>
        <DocTop>
          <LogoBox><SheetsLogo /></LogoBox>
          <TitleBlock>
            <TitleRow>
              <DocTitle>Untitled spreadsheet</DocTitle>
              <TitleIcon><MdStarBorder size={19} /></TitleIcon>
              <TitleIcon><MdOutlineDriveFileMove size={19} /></TitleIcon>
              <TitleIcon><MdOutlineCloudDone size={19} /></TitleIcon>
            </TitleRow>
            <MenuRow>{menus.map(([name, w, t]) => <MenuItem key={name} $w={w} $track={t}>{name}</MenuItem>)}</MenuRow>
          </TitleBlock>
          <DocActions>
            <ActionSlot $w={49}><MdHistory size={24} /></ActionSlot>
            <ActionSlot $w={48}><MdOutlineComment size={24} /></ActionSlot>
            <ActionSlot $w={40} $gap={11}><Stroke size={22} box={22} w={2} d="M6.500 4H16v14H2V8.500zM17 11l4-4v8z" /></ActionSlot>
            <ActionSlot $w={8}><Caret /></ActionSlot>
            <SharePill>
              <ShareMain><MdOutlineLock size={18} /> Share</ShareMain>
              <ShareMore><Caret /></ShareMore>
            </SharePill>
            <Avatar $size={32} $font={17}>A</Avatar>
          </DocActions>
        </DocTop>
        <ToolbarContent />
      </DocHeader>

      <FormulaBar>
        <NameBox>Q10</NameBox>
        <Caret color="#444746" />
        <Divider $before={12} $after={12} />
        <Fx>fx</Fx>
      </FormulaBar>

      <GridFrame>
        <Grid>
          <HeaderRow>
            <Corner />
            {["A", "B", "C", "D", "E", ""].map((c) => <ColumnHead key={c} $last={!c}>{c}</ColumnHead>)}
          </HeaderRow>
          {rows.map(([n, id, date, count, text, conv, link]) => (
            <Row key={n}>
              <RowHead>{n}</RowHead>
              <Cell>{id}</Cell>
              <Cell>{date}</Cell>
              <NumberCell>{count}</NumberCell>
              <Cell>{text}</Cell>
              {link
                ? <><Cell>{conv}</Cell><LinkCell $open>http</LinkCell></>
                : <Cell $span={2} $open>{conv}</Cell>}
            </Row>
          ))}
        </Grid>
        <VScroll>
          <VTop />
          <VThumb />
          <ScrollArrow $w={11} $h={16}><svg width="6" height="3"><path d="M0 3h6L3 0z" fill="#85888c" /></svg></ScrollArrow>
          <ScrollArrow $w={11} $h={16}><svg width="6" height="3"><path d="M0 0h6L3 3z" fill="#85888c" /></svg></ScrollArrow>
        </VScroll>
        <HScroll>
          <HStart />
          <HThumb />
          <ScrollArrow $w={16} $h={12} $side><svg width="4" height="6"><path d="M4 0v6L0 3z" fill="#85888c" /></svg></ScrollArrow>
          <ScrollArrow $w={16} $h={12} $side><svg width="4" height="6"><path d="M0 0v6l4-3z" fill="#85888c" /></svg></ScrollArrow>
        </HScroll>
        <ScrollCorner />
      </GridFrame>

      <SheetBar>
        <BarButton><Stroke size={12} box={12} w={1.600} d="M1 6h10M6 1v10" /></BarButton>
        <BarButton><Stroke size={14} box={14} w={1.600} d="M0 2h14M0 7h14M0 12h14" /></BarButton>
        <SheetTab>bahlil_lahadalia<Caret /></SheetTab>
        <PanelToggle><Stroke size={10} box={10} w={1.800} d="M7.500 1L3 5l4.500 4" /></PanelToggle>
      </SheetBar>

      <DockBar>
        {dockApps.map((app, i) =>
          app.line ? <DockLine key={i} /> : (
            <DockItem key={i} $lit={app.lit}>
              {app.node}
              {app.dots && <RunningDots>{Array.from({ length: app.dots }, (_, k) => <Dot key={k} />)}</RunningDots>}
            </DockItem>
          )
        )}
      </DockBar>
      <Tooltip><Label $track={0.2}>Visual Studio Code</Label></Tooltip>
    </Screen>
  );
}
